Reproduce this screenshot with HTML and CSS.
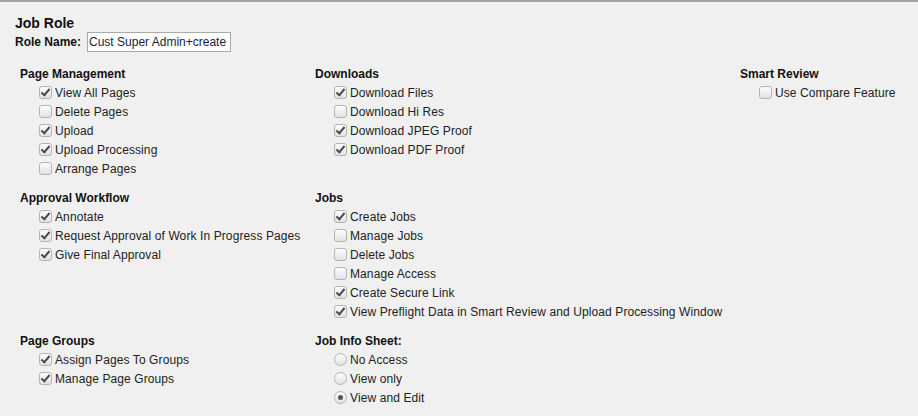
FILE: index.html
```html
<!DOCTYPE html>
<html lang="en">
  <head>
    <meta charset="UTF-8" />
    <title>Job Role</title>
    <link rel="stylesheet" href="styles.css">
  </head>
  <body>
    <h1 class="title">Job Role</h1>
    <div class="role-name">
      <label for="role-name">Role Name:</label>
      <input type="text" id="role-name" value="Cust Super Admin+create" />
    </div>

    <div class="permissions">
      <!-- Row 1 -->
      <div class="group">
        <div class="group-title">Page Management</div>
        <label class="item"><input type="checkbox" checked />View All Pages</label>
        <label class="item"><input type="checkbox" />Delete Pages</label>
        <label class="item"><input type="checkbox" checked />Upload</label>
        <label class="item"><input type="checkbox" checked />Upload Processing</label>
        <label class="item"><input type="checkbox" />Arrange Pages</label>
      </div>
      <div class="group">
        <div class="group-title">Downloads</div>
        <label class="item"><input type="checkbox" checked />Download Files</label>
        <label class="item"><input type="checkbox" />Download Hi Res</label>
        <label class="item"><input type="checkbox" checked />Download JPEG Proof</label>
        <label class="item"><input type="checkbox" checked />Download PDF Proof</label>
      </div>
      <div class="group">
        <div class="group-title">Smart Review</div>
        <label class="item"><input type="checkbox" />Use Compare Feature</label>
      </div>

      <!-- Row 2 -->
      <div class="group">
        <div class="group-title">Approval Workflow</div>
        <label class="item"><input type="checkbox" checked />Annotate</label>
        <label class="item"><input type="checkbox" checked />Request Approval of Work In Progress Pages</label>
        <label class="item"><input type="checkbox" checked />Give Final Approval</label>
      </div>
      <div class="group">
        <div class="group-title">Jobs</div>
        <label class="item"><input type="checkbox" checked />Create Jobs</label>
        <label class="item"><input type="checkbox" />Manage Jobs</label>
        <label class="item"><input type="checkbox" />Delete Jobs</label>
        <label class="item"><input type="checkbox" />Manage Access</label>
        <label class="item"><input type="checkbox" checked />Create Secure Link</label>
        <label class="item"><input type="checkbox" checked />View Preflight Data in Smart Review and Upload Processing Window</label>
      </div>
      <div class="group"></div>

      <!-- Row 3 -->
      <div class="group">
        <div class="group-title">Page Groups</div>
        <label class="item"><input type="checkbox" checked />Assign Pages To Groups</label>
        <label class="item"><input type="checkbox" checked />Manage Page Groups</label>
      </div>
      <div class="group">
        <div class="group-title">Job Info Sheet:</div>
        <label class="item"><input type="radio" name="job-info" />No Access</label>
        <label class="item"><input type="radio" name="job-info" />View only</label>
        <label class="item"><input type="radio" name="job-info" checked />View and Edit</label>
      </div>
    </div>
  </body>
</html>
```

FILE: styles.css
```css
/* Page */
body {
  margin: 0;
  padding: 12px 15px 0;
  border-top: 2px solid #a3a3a3;
  background: #f0f0f0;
  font-family: "Liberation Sans", Arial, sans-serif;
  font-size: 12px;
  color: #222;
}

.title {
  margin: 0;
  font-size: 14px;
  line-height: 18px;
  font-weight: bold;
  color: #111;
}

/* Role name row */
.role-name {
  display: flex;
  align-items: center;
  gap: 6px;
  height: 20px;
}

.role-name label {
  font-weight: bold;
  color: #111;
}

.role-name input {
  box-sizing: border-box;
  width: 144px;
  height: 20px;
  padding: 0 1px;
  border: 1px solid #a9a9a9;
  background: #fff;
  font-family: inherit;
  font-size: 12px;
  color: #1c1c3c;
  outline: none;
}

/* Permission grid */
.permissions {
  display: grid;
  grid-template-columns: 295px 425px auto;
  margin-top: 13px;
  padding-left: 5px;
}

.group {
  margin-bottom: 11px;
}

.group-title {
  font-weight: bold;
  line-height: 18px;
  color: #111;
}

.item {
  display: flex;
  align-items: center;
  height: 19px;
  padding-left: 19px;
  letter-spacing: 0.1px;
}

/* Checkboxes and radios */
.item input {
  appearance: none;
  -webkit-appearance: none;
  position: relative;
  box-sizing: border-box;
  width: 13px;
  height: 13px;
  margin: 0 3px 0 0;
  border: 1px solid #b4b4b4;
  background: linear-gradient(#fdfdfd, #e2e2e2);
  flex-shrink: 0;
}

.item input[type="checkbox"] {
  border-radius: 3px;
}

.item input[type="checkbox"]:checked::after {
  content: "";
  position: absolute;
  left: 3px;
  top: 0;
  width: 3px;
  height: 7px;
  border: solid #4a4a4a;
  border-width: 0 2px 2px 0;
  transform: rotate(40deg);
}

.item input[type="radio"] {
  border-radius: 50%;
}

.item input[type="radio"]:checked::after {
  content: "";
  position: absolute;
  left: 3px;
  top: 3px;
  width: 5px;
  height: 5px;
  border-radius: 50%;
  background: #555;
}
```
